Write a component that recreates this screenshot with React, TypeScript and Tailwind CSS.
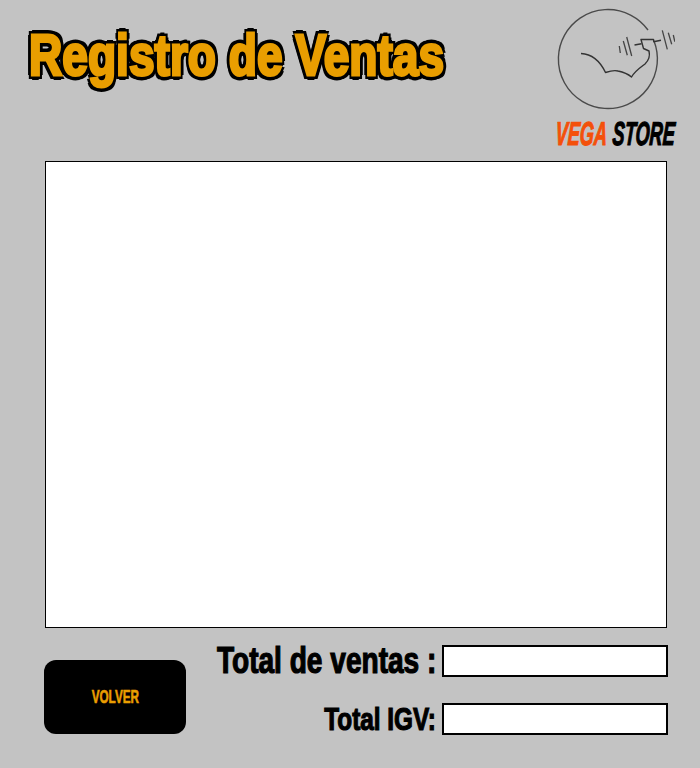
const impact = "font-['Liberation_Sans',sans-serif] font-bold whitespace-nowrap";

function Logo() {
  return (
    <div className="flex w-[120px] flex-col items-center pt-[1px]">
      <svg width="120" height="112" viewBox="0 0 120 112" fill="none" stroke="#4a4a4a" strokeWidth="1.4" className="block">
        {/* circle, open where the dumbbell crosses it */}
        <path d="M93 29 A49.5 49.5 0 1 0 99 40" />
        {/* arm */}
        <path
          d="M26 52.5 C36 53 45 60 50.5 71.5 C55 70 60 69 63 70 C68 71 73 73 76.5 76 C80 70 86 66 90 63 C94 59 95 54 94 50 L88.5 47.5 L86 38.5 L98.5 38.5 L99 41"
          stroke="#333"
          strokeLinejoin="round"
        />
        {/* dumbbell */}
        <path d="M79.5 44 L86.5 42.7 M98.5 40.7 L106 39.3" stroke="#333" />
        <path d="M64.3 45 L65.3 52 M68.3 40 L72.3 54.3 M71.7 36 L76.7 55" stroke="#444" strokeWidth="1.3" />
        <path d="M107.3 29.3 L112.3 48.3 M113.3 31.7 L116.7 43.3 M118.3 34 L119.8 40.7" stroke="#444" strokeWidth="1.3" />
      </svg>
      <div className="mt-[8px] flex w-full justify-center">
        <div className={`${impact} flex shrink-0 origin-center scale-x-[0.55] -skew-x-[6deg] gap-[10px] text-[33px] leading-[26px] italic [-webkit-text-stroke:1.2px_currentColor]`}>
          <span className="text-[#f4500a]">VEGA</span>
          <span className="text-black">STORE</span>
        </div>
      </div>
    </div>
  );
}

export default function App() {
  return (
    <div className="h-[768px] w-[700px] overflow-hidden bg-[#c3c3c3]">
      <header className="flex h-[161px] items-start justify-between pr-[25px] pl-[29px]">
        <h1
          className={`${impact} mt-[24px] origin-left scale-x-[0.795] text-[58px] leading-[62px] text-[#e99e00] [-webkit-text-stroke:3px_#e99e00] [text-shadow:-5px_0_0_#000,5px_0_0_#000,0_-5px_0_#000,0_5px_0_#000,-4px_-4px_0_#000,4px_-4px_0_#000,-4px_4px_0_#000,4px_4px_0_#000]`}
        >
          Registro de Ventas
        </h1>
        <Logo />
      </header>

      <main className="ml-[45px] h-[467px] w-[622px] border border-black bg-white" />

      <footer className="mt-[17px] flex items-start pr-[32px] pl-[44px]">
        <button className="mt-[15px] flex h-[74px] w-[142px] shrink-0 items-center justify-center rounded-[12px] bg-black">
          <span className={`${impact} scale-x-[0.65] text-[18px] text-[#e99e00] [-webkit-text-stroke:0.6px_#e99e00]`}>VOLVER</span>
        </button>
        <div className="flex min-w-0 flex-1 flex-col gap-[26px]">
          <div className="flex h-[32px] items-center justify-end gap-[6px]">
            <span className={`${impact} shrink-0 origin-right scale-x-[0.78] text-[36px] leading-[32px] text-black [-webkit-text-stroke:1.2px_#000]`}>Total de ventas :</span>
            <div className="h-[32px] w-[226px] shrink-0 border-[2px] border-black bg-white" />
          </div>
          <div className="flex h-[32px] items-center justify-end gap-[6px]">
            <span className={`${impact} shrink-0 origin-right scale-x-[0.76] text-[32px] leading-[32px] text-black [-webkit-text-stroke:1.2px_#000]`}>Total IGV:</span>
            <div className="h-[32px] w-[226px] shrink-0 border-[2px] border-black bg-white" />
          </div>
        </div>
      </footer>
    </div>
  );
}
